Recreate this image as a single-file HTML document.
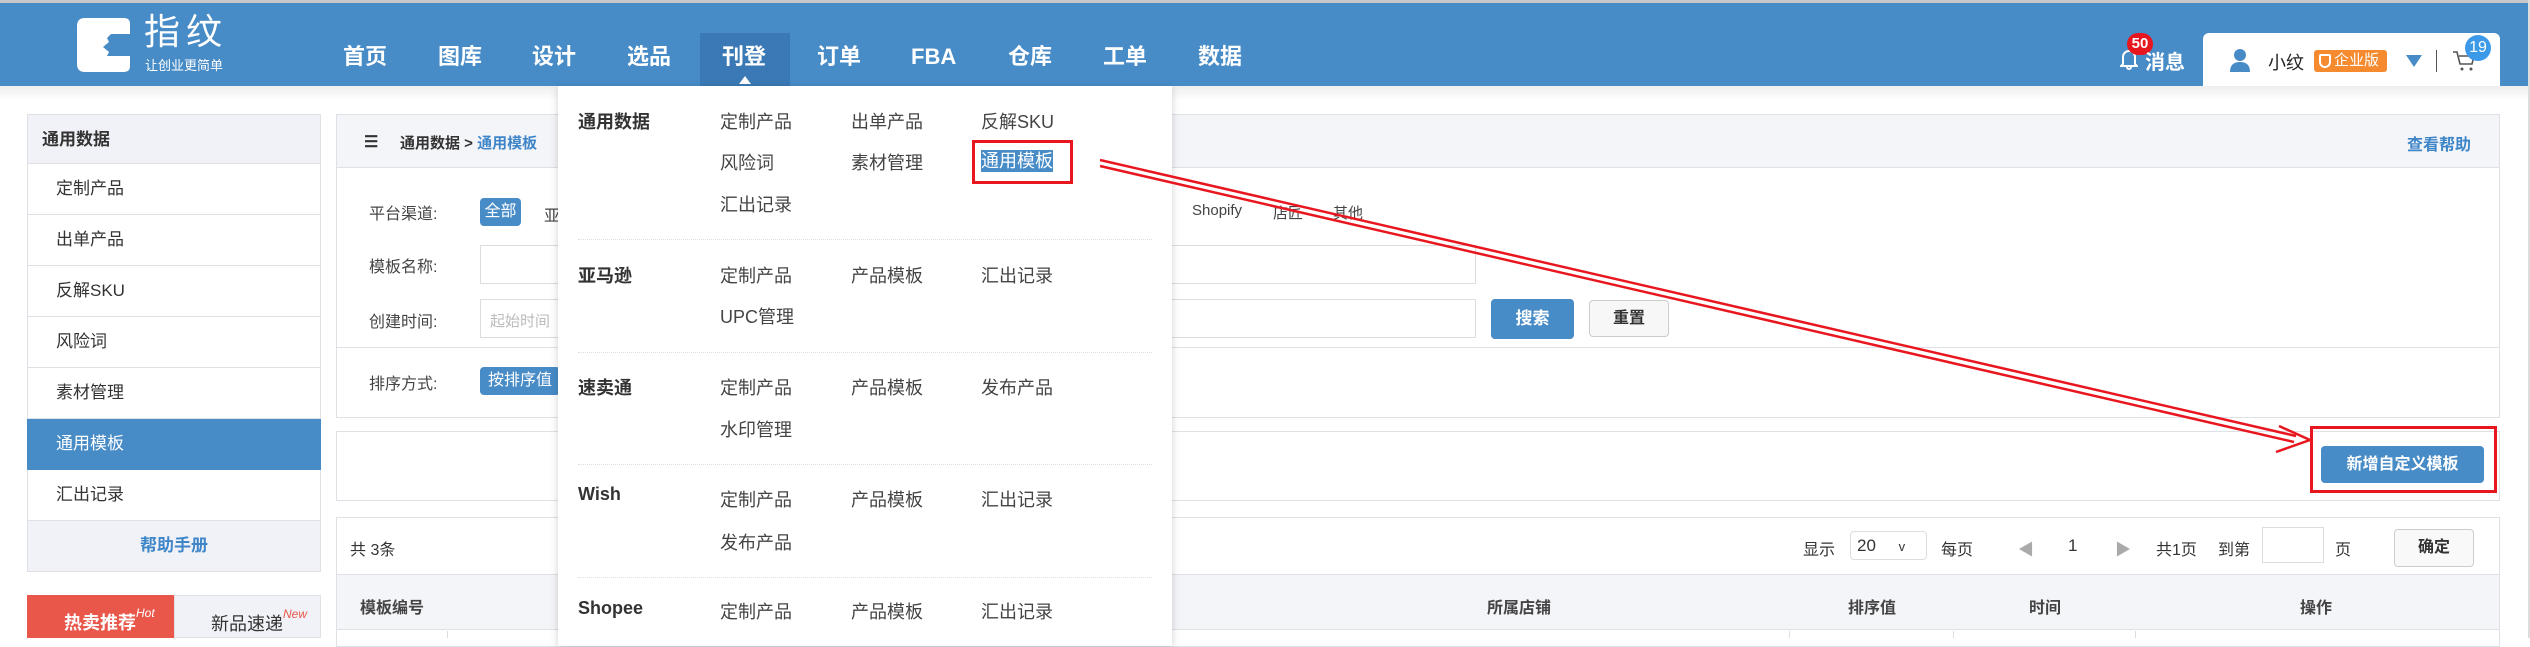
<!DOCTYPE html>
<html><head><meta charset="utf-8"><style>
*{margin:0;padding:0;box-sizing:border-box}
body{width:2530px;height:638px;overflow:hidden;background:#fff;font-family:"Liberation Sans","Noto Sans CJK SC",sans-serif;color:#333;position:relative}
.a{position:absolute;white-space:nowrap}
.hdr{position:absolute;left:0;top:3px;width:2528px;height:83px;background:#478bc7}
.nav{position:absolute;top:42px;font-size:22px;font-weight:bold;color:#fff;line-height:30px}
.sb{position:absolute;left:27px;width:294px;height:51px;border:1px solid #dfe1e6;border-top:none;font-size:17px;line-height:50px;padding-left:28px;background:#fff}
.lbl{font-size:16px;color:#444}
.dd{position:absolute;left:558px;top:86px;width:614px;height:560px;background:#fff;box-shadow:0 2px 8px rgba(0,0,0,.18)}
.dh{position:absolute;left:20px;font-size:18px;font-weight:bold;color:#333}
.di{position:absolute;font-size:18px;color:#444}
.sep{position:absolute;left:20px;width:574px;border-top:1px dotted #ddd}
.btn{position:absolute;background:#478bc7;color:#fff;border-radius:4px;text-align:center}
.th{position:absolute;top:594px;font-size:16px;font-weight:bold;color:#444}
</style></head><body>
<div class="a" style="left:0;top:0;width:2530px;height:3px;background:#c8c8c8"></div>
<div class="hdr"></div>
<div class="a" style="left:0;top:86px;width:2528px;height:14px;background:linear-gradient(#eee,#fff)"></div>
<div class="a" style="left:2528px;top:0;width:2px;height:638px;background:#ddd"></div>
<svg class="a" style="left:77px;top:18px" width="53" height="54" viewBox="0 0 53 54"><path d="M8 0H47Q53 0 53 6V16H34L30 20L32 24L26 29L32 34L30 38H53V48Q53 54 47 54H8Q0 54 0 46V8Q0 0 8 0Z" fill="#fff"/></svg>
<div class="a" style="left:144px;top:12px;font-size:36px;color:#fff;letter-spacing:6px;line-height:40px">指纹</div>
<div class="a" style="left:145px;top:59px;font-size:13px;color:#fff;line-height:14px">让创业更简单</div>
<div class="a" style="left:700px;top:33px;width:90px;height:53px;background:#3a79b5"></div>
<div class="a" style="left:739px;top:76px;width:0;height:0;border-left:6px solid transparent;border-right:6px solid transparent;border-bottom:8px solid #fff"></div>
<div class="nav" style="left:343px">首页</div><div class="nav" style="left:438px">图库</div><div class="nav" style="left:532px">设计</div><div class="nav" style="left:627px">选品</div><div class="nav" style="left:722px">刊登</div><div class="nav" style="left:817px">订单</div><div class="nav" style="left:911px">FBA</div><div class="nav" style="left:1008px">仓库</div><div class="nav" style="left:1103px">工单</div><div class="nav" style="left:1198px">数据</div>
<svg class="a" style="left:2120px;top:48px" width="18" height="22" viewBox="0 0 18 22"><path d="M3 16V9a6 6 0 0 1 12 0v7l2 2H1z M7 19a2 2 0 0 0 4 0" fill="none" stroke="#fff" stroke-width="2"/></svg>
<div class="a" style="left:2127px;top:33px;width:26px;height:22px;border-radius:11px;background:#e8161e;color:#fff;font-size:15px;font-weight:bold;text-align:center;line-height:22px">50</div>
<div class="a" style="left:2145px;top:46px;font-size:20px;font-weight:bold;color:#fff">消息</div>
<div class="a" style="left:2203px;top:33px;width:297px;height:53px;background:#fff;border-radius:6px 6px 0 0"></div>
<svg class="a" style="left:2228px;top:48px" width="24" height="24" viewBox="0 0 24 24"><circle cx="12" cy="7" r="6" fill="#478bc7"/><path d="M2 24Q2 14 12 14Q22 14 22 24Z" fill="#478bc7"/></svg>
<div class="a" style="left:2268px;top:49px;font-size:18px;color:#222">小纹</div>
<div class="a" style="left:2314px;top:50px;width:73px;height:22px;border-radius:3px;background:#f68a2e;color:#fff;font-size:15px;line-height:22px;padding-left:20px">企业版</div>
<div class="a" style="left:2319px;top:54px;width:12px;height:14px;border:2px solid #fff;border-radius:2px 2px 6px 6px"></div>
<div class="a" style="left:2406px;top:55px;width:0;height:0;border-left:8px solid transparent;border-right:8px solid transparent;border-top:12px solid #478bc7"></div>
<div class="a" style="left:2436px;top:50px;width:1px;height:22px;background:#555"></div>
<svg class="a" style="left:2452px;top:50px" width="24" height="22" viewBox="0 0 24 22"><path d="M1 2h4l3 12h12l2-8H7" fill="none" stroke="#555" stroke-width="1.6"/><circle cx="10" cy="19" r="1.5" fill="#555"/><circle cx="19" cy="19" r="1.5" fill="#555"/></svg>
<div class="a" style="left:2465px;top:35px;width:26px;height:26px;border-radius:13px;background:#3d9ae8;color:#fff;font-size:16px;text-align:center;line-height:26px">19</div>
<div class="sb" style="top:114px;border-top:1px solid #dfe1e6;background:#f0f2f7;padding-left:14px;font-weight:bold;height:50px">通用数据</div>
<div class="sb" style="top:164px">定制产品</div>
<div class="sb" style="top:215px">出单产品</div>
<div class="sb" style="top:266px">反解SKU</div>
<div class="sb" style="top:317px">风险词</div>
<div class="sb" style="top:368px">素材管理</div>
<div class="sb" style="top:419px;background:#478bc7;color:#fff;border-color:#478bc7">通用模板</div>
<div class="sb" style="top:470px">汇出记录</div>
<div class="sb" style="top:521px;background:#f0f2f7;padding:0;text-align:center;color:#3f86c9;font-weight:bold">帮助手册</div>
<div class="a" style="left:27px;top:595px;width:147px;height:43px;background:#e8574a;color:#fff;font-size:18px;font-weight:bold;padding:14px 0 0 37px">热卖推荐<span style="font-size:12px;font-style:italic;position:relative;top:-12px;font-weight:normal">Hot</span></div>
<div class="a" style="left:174px;top:595px;width:147px;height:43px;background:#f0f2f7;border:1px solid #dfe1e6;font-size:18px;padding:14px 0 0 36px">新品速递<span style="font-size:12px;font-style:italic;color:#e8574a;position:relative;top:-12px">New</span></div>
<div class="a" style="left:336px;top:114px;width:2164px;height:304px;border:1px solid #dfe1e6"></div>
<div class="a" style="left:337px;top:115px;width:2162px;height:53px;background:#f4f5f9;border-bottom:1px solid #dfe1e6"></div>
<div class="a" style="left:364px;top:132px;font-size:16px;font-weight:bold;color:#333">☰</div>
<div class="a" style="left:400px;top:132px;font-size:15px;font-weight:bold;color:#333">通用数据 &gt; <span style="color:#3f86c9">通用模板</span></div>
<div class="a" style="left:2407px;top:131px;font-size:16px;font-weight:bold;color:#3f86c9">查看帮助</div>
<div class="a lbl" style="left:369px;top:200px">平台渠道:</div>
<div class="btn" style="left:480px;top:198px;width:41px;height:28px;font-size:16px;line-height:28px">全部</div>
<div class="a lbl" style="left:544px;top:202px">亚</div>
<div class="a" style="left:1192px;top:202px;font-size:15px;color:#444">Shopify</div>
<div class="a" style="left:1273px;top:202px;font-size:15px;color:#444">店匠</div>
<div class="a" style="left:1333px;top:202px;font-size:15px;color:#444">其他</div>
<div class="a lbl" style="left:369px;top:253px">模板名称:</div>
<div class="a" style="left:480px;top:245px;width:996px;height:39px;border:1px solid #ddd"></div>
<div class="a lbl" style="left:369px;top:308px">创建时间:</div>
<div class="a" style="left:480px;top:299px;width:996px;height:39px;border:1px solid #ddd"></div>
<div class="a" style="left:490px;top:310px;font-size:15px;color:#bbb">起始时间</div>
<div class="btn" style="left:1491px;top:299px;width:83px;height:40px;font-size:17px;line-height:40px;font-weight:bold">搜索</div>
<div class="a" style="left:1589px;top:300px;width:80px;height:37px;border:1px solid #ccc;border-radius:4px;background:#f7f7f7;font-size:16px;text-align:center;line-height:35px;font-weight:bold">重置</div>
<div class="a" style="left:336px;top:347px;width:2164px;border-top:1px solid #dfe1e6"></div>
<div class="a lbl" style="left:369px;top:370px">排序方式:</div>
<div class="btn" style="left:480px;top:367px;width:80px;height:28px;font-size:16px;line-height:28px">按排序值</div>
<div class="a" style="left:336px;top:431px;width:2164px;height:70px;border:1px solid #dfe1e6"></div>
<div class="btn" style="left:2321px;top:446px;width:163px;height:37px;font-size:16px;line-height:37px;font-weight:bold">新增自定义模板</div>
<div class="a" style="left:2310px;top:426px;width:187px;height:67px;border:3px solid #e8161e"></div>
<div class="a" style="left:336px;top:517px;width:2164px;height:130px;border:1px solid #dfe1e6"></div>
<div class="a" style="left:350px;top:536px;font-size:16px">共 3条</div>
<div class="a" style="left:1803px;top:536px;font-size:16px">显示</div>
<div class="a" style="left:1850px;top:531px;width:77px;height:29px;border:1px solid #ddd;border-radius:4px;font-size:17px;line-height:27px;padding-left:6px">20 <span style="margin-left:18px;font-size:13px">v</span></div>
<div class="a" style="left:1941px;top:536px;font-size:16px">每页</div>
<div class="a" style="left:2018px;top:536px;font-size:16px;color:#aaa">◀</div>
<div class="a" style="left:2068px;top:536px;font-size:17px">1</div>
<div class="a" style="left:2115px;top:536px;font-size:16px;color:#aaa">▶</div>
<div class="a" style="left:2156px;top:536px;font-size:16px">共1页</div>
<div class="a" style="left:2218px;top:536px;font-size:16px">到第</div>
<div class="a" style="left:2262px;top:527px;width:62px;height:36px;border:1px solid #ddd"></div>
<div class="a" style="left:2335px;top:536px;font-size:16px">页</div>
<div class="a" style="left:2394px;top:529px;width:80px;height:38px;border:1px solid #ccc;border-radius:4px;background:#f9f9f9;font-size:16px;font-weight:bold;text-align:center;line-height:36px">确定</div>
<div class="a" style="left:337px;top:574px;width:2162px;height:56px;background:#f4f5f9;border-top:1px solid #dfe1e6;border-bottom:1px solid #dfe1e6"></div>
<div class="th" style="left:360px">模板编号</div>
<div class="th" style="left:1487px">所属店铺</div>
<div class="th" style="left:1848px">排序值</div>
<div class="th" style="left:2029px">时间</div>
<div class="th" style="left:2300px">操作</div>
<div class="a" style="left:447px;top:631px;width:1px;height:7px;background:#ddd"></div>
<div class="a" style="left:1789px;top:631px;width:1px;height:7px;background:#ddd"></div>
<div class="a" style="left:1953px;top:631px;width:1px;height:7px;background:#ddd"></div>
<div class="a" style="left:2135px;top:631px;width:1px;height:7px;background:#ddd"></div>
<div class="dd">
<div class="dh" style="top:22px">通用数据</div>
<div class="di" style="left:162px;top:22px">定制产品</div><div class="di" style="left:293px;top:22px">出单产品</div><div class="di" style="left:423px;top:22px">反解SKU</div>
<div class="di" style="left:162px;top:63px">风险词</div><div class="di" style="left:293px;top:63px">素材管理</div>
<div class="di" style="left:423px;top:64px;background:#478bc7;color:#fff;line-height:22px">通用模板</div>
<div class="a" style="left:414px;top:54px;width:101px;height:44px;border:3px solid #e8161e"></div>
<div class="di" style="left:162px;top:105px">汇出记录</div>
<div class="sep" style="top:153px"></div>
<div class="dh" style="top:176px">亚马逊</div>
<div class="di" style="left:162px;top:176px">定制产品</div><div class="di" style="left:293px;top:176px">产品模板</div><div class="di" style="left:423px;top:176px">汇出记录</div>
<div class="di" style="left:162px;top:217px">UPC管理</div>
<div class="sep" style="top:266px"></div>
<div class="dh" style="top:288px">速卖通</div>
<div class="di" style="left:162px;top:288px">定制产品</div><div class="di" style="left:293px;top:288px">产品模板</div><div class="di" style="left:423px;top:288px">发布产品</div>
<div class="di" style="left:162px;top:330px">水印管理</div>
<div class="sep" style="top:378px"></div>
<div class="dh" style="top:398px">Wish</div>
<div class="di" style="left:162px;top:400px">定制产品</div><div class="di" style="left:293px;top:400px">产品模板</div><div class="di" style="left:423px;top:400px">汇出记录</div>
<div class="di" style="left:162px;top:443px">发布产品</div>
<div class="sep" style="top:491px"></div>
<div class="dh" style="top:512px">Shopee</div>
<div class="di" style="left:162px;top:512px">定制产品</div><div class="di" style="left:293px;top:512px">产品模板</div><div class="di" style="left:423px;top:512px">汇出记录</div>
</div>
<svg class="a" style="left:0;top:0" width="2530" height="638"><g fill="none" stroke="#e8161e" stroke-width="2.5"><path d="M1100 160L2296 436"/><path d="M1100 166L2294 442"/><path d="M2279 426L2310 440L2276 452"/></g></svg>
</body></html>
